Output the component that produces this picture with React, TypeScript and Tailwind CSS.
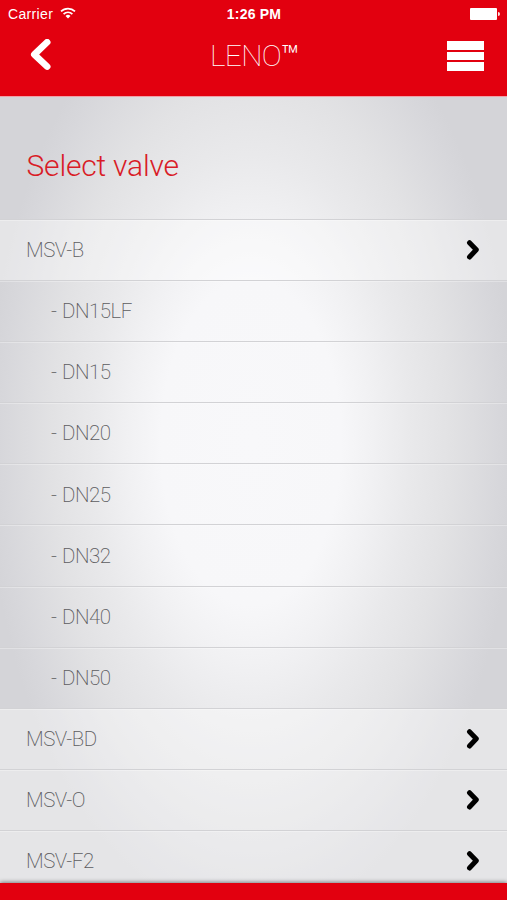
import { useState } from 'react';

interface Valve {
    name: string;
    sizes: string[];
}

const VALVES: Valve[] = [
    { name: 'MSV-B', sizes: ['DN15LF', 'DN15', 'DN20', 'DN25', 'DN32', 'DN40', 'DN50'] },
    { name: 'MSV-BD', sizes: [] },
    { name: 'MSV-O', sizes: [] },
    { name: 'MSV-F2', sizes: [] },
];

function StatusBar() {
    return (
        <div className="grid h-[28px] grid-cols-3 items-center pl-2 pr-[7px] font-['Liberation_Sans',sans-serif] text-[14px] leading-none text-white">
            <div className="flex items-center gap-[7px]">
                <span className="tracking-[0.35px]">Carrier</span>
                <svg width="16" height="12" viewBox="0 0 16 12" fill="none" stroke="white" strokeWidth="1.7" className="-mt-0.5">
                    <path d="M1 4.4a10 10 0 0 1 14 0" />
                    <path d="M3.6 7.1a6.2 6.2 0 0 1 8.8 0" />
                    <path d="M8 11.6 5.5 9a3.6 3.6 0 0 1 5 0z" fill="white" stroke="none" />
                </svg>
            </div>
            <span className="text-center text-[14px] font-bold tracking-[0.2px]">1:26 PM</span>
            <div className="-mt-px flex items-center justify-end gap-px">
                <span className="h-[12px] w-[27px] rounded-[1px] bg-white" />
                <span className="h-[4px] w-[2px] rounded-r-full bg-white/90" />
            </div>
        </div>
    );
}

function Header() {
    return (
        <header className="h-[97px] shrink-0 border-b border-[#f0a0a8] bg-[#e2000f]">
            <StatusBar />
            <div className="grid h-[56px] grid-cols-3 items-center pl-[30px] pr-[23px]">
                <button className="justify-self-start" aria-label="Back">
                    <svg width="22" height="34" viewBox="0 0 22 34" fill="none" stroke="white" strokeWidth="6.6" strokeLinecap="round" strokeLinejoin="round">
                        <path d="M17.2 3.2 4.3 15.5 17.2 27.6" />
                    </svg>
                </button>
                <h1 className="-ml-[5px] text-center text-[30px] font-thin leading-none tracking-[-0.7px] text-white">
                    LENO<span className="font-light">™</span>
                </h1>
                <button className="flex flex-col gap-[2px] justify-self-end" aria-label="Menu">
                    <span className="h-[8.6px] w-[37px] bg-white" />
                    <span className="h-[8.6px] w-[37px] bg-white" />
                    <span className="h-[8.6px] w-[37px] bg-white" />
                </button>
            </div>
        </header>
    );
}

function ChevronRight() {
    return (
        <svg width="14" height="20" viewBox="0 0 14 20" fill="none" stroke="black" strokeWidth="5" strokeLinecap="round" strokeLinejoin="round">
            <path d="M3.5 2.7 10.3 9.8 3.5 17" />
        </svg>
    );
}

export default function App() {
    const [open, setOpen] = useState('MSV-B');

    return (
        <div className="flex h-[900px] w-[507px] flex-col overflow-hidden bg-[#e2000f] font-[Roboto,sans-serif]">
            <Header />
            <main className="min-h-0 flex-1 overflow-hidden bg-[radial-gradient(ellipse_265px_480px_at_251px_345px,#f8f8fa_0%,#f7f7f9_34%,#f1f1f3_46%,#e9e9eb_60%,#e2e2e4_75%,#d7d7db_94%,#d4d4d8_100%)]">
                <h2 className="h-[122px] pl-[26.5px] pt-[49px] text-[30px] font-light leading-[40px] tracking-[-0.2px] text-[#d91c27]">Select valve</h2>
                <ul>
                    {VALVES.map((valve) => (
                        <li key={valve.name}>
                            <button
                                onClick={() => setOpen(open === valve.name ? '' : valve.name)}
                                className="flex h-[61.1px] w-full items-center justify-between border-t border-[#d2d2d5] bg-white/40 pl-[26px] pr-[27px] text-left text-[20.5px] font-extralight tracking-[-0.5px] text-[#5c5c5f] shadow-[inset_0_1px_0_rgba(255,255,255,0.3)]"
                            >
                                <span className="pt-px">{valve.name}</span>
                                <ChevronRight />
                            </button>
                            {open === valve.name && valve.sizes.map((size) => (
                                <div key={size} className="flex h-[61.1px] items-center border-t border-[#d2d2d5] pl-[51px] pt-px text-[20.5px] font-extralight tracking-[-0.5px] text-[#5c5c5f] shadow-[inset_0_1px_0_rgba(255,255,255,0.3)] [word-spacing:1px]">
                                    - {size}
                                </div>
                            ))}
                        </li>
                    ))}
                </ul>
            </main>
            <footer className="h-[17.5px] shrink-0 bg-[#e2000f] shadow-[0_-1px_4px_rgba(0,0,0,0.45)]" />
        </div>
    );
}
